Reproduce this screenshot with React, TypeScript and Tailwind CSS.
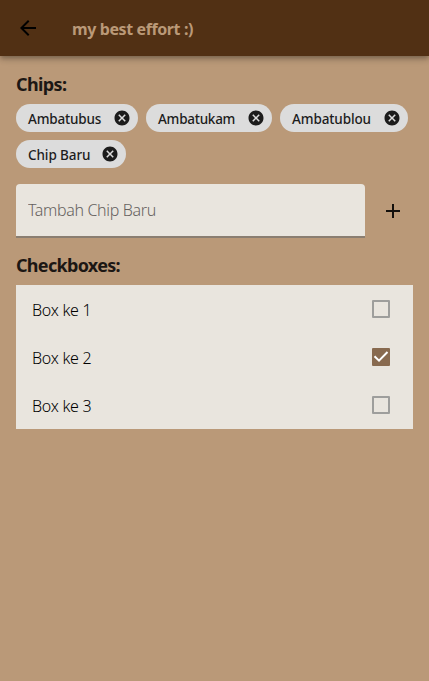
import { useState } from 'react';

const initialChips = [
  { label: 'Ambatubus', width: 'w-[122px]', tracking: 'tracking-[-0.17px]' },
  { label: 'Ambatukam', width: 'w-[126px]', tracking: 'tracking-[-0.25px]' },
  { label: 'Ambatublou', width: 'w-[128px]', tracking: 'tracking-[-0.12px]' },
  { label: 'Chip Baru', width: 'w-[110px]', tracking: 'tracking-[-0.1px]' },
];

function Icon({ path, className }: { path: string; className: string }) {
  return (
    <svg viewBox="0 0 24 24" fill="currentColor" className={`shrink-0 ${className}`}>
      <path d={path} />
    </svg>
  );
}

const BACK = 'M20 11H7.83l5.59-5.59L12 4l-8 8 8 8 1.41-1.41L7.83 13H20z';
const CANCEL =
  'M12 2C6.47 2 2 6.47 2 12s4.47 10 10 10 10-4.47 10-10S17.53 2 12 2zm5 13.59L15.59 17 12 13.41 8.41 17 7 15.59 10.59 12 7 8.41 8.41 7 12 10.59 15.59 7 17 8.41 13.41 12 17 15.59z';

function Checkbox({ checked }: { checked: boolean }) {
  return checked ? (
    <span className="flex h-[18px] w-[18px] items-center justify-center rounded-[1px] bg-[#886a4f] text-white">
      <svg viewBox="0 0 18 18" className="h-[18px] w-[18px]" fill="none" stroke="currentColor" strokeWidth="2">
        <path d="M2.5 8.2 7 12.6 15.5 4" />
      </svg>
    </span>
  ) : (
    <span className="h-[18px] w-[18px] rounded-[1px] border-2 border-[#9e9e9c]" />
  );
}

export default function App() {
  const [boxes, setBoxes] = useState([false, true, false]);
  return (
    <div className="h-[681px] w-full overflow-hidden bg-[#ba9978] font-['Noto_Sans','Open_Sans',sans-serif] text-[#1c1714]">
      <header className="relative flex h-14 items-center bg-[#513014] pl-4 shadow-[0_2px_4px_-1px_rgba(0,0,0,0.2),0_4px_5px_rgba(0,0,0,0.14),0_1px_10px_rgba(0,0,0,0.12)]">
        <Icon path={BACK} className="h-6 w-6 text-black" />
        <h1 className="ml-8 mt-[2px] text-base font-bold tracking-[-0.4px] text-[#ba9978]">my best effort :)</h1>
      </header>
      <main className="px-4 pt-[15px]">
        <h2 className="h-[33px] text-lg leading-[26px] font-bold tracking-[-0.6px]">Chips:</h2>
        <div className="-mr-2 flex flex-wrap gap-2">
          {initialChips.map((c) => (
            <div
              key={c.label}
              className={`flex h-7 items-center justify-between rounded-full bg-[#dcdcdc] pr-[7px] pl-3 text-[#1c1c1c] ${c.width}`}
            >
              <span className={`pt-[2px] text-[13.5px] leading-5 font-medium whitespace-nowrap ${c.tracking}`}>{c.label}</span>
              <Icon path={CANCEL} className="h-[18px] w-[18px]" />
            </div>
          ))}
        </div>
        <div className="mt-4 flex items-center">
          <input
            placeholder="Tambah Chip Baru"
            className="h-[54px] w-[349px] rounded-t border-b-2 border-[#8a7e71] bg-[#e9e5de] px-3 text-base font-light tracking-[-0.35px] outline-none placeholder:text-[#66625e]"
          />
          <Icon path="M19 13h-6v6h-2v-6H5v-2h6V5h2v6h6v2z" className="ml-4 h-6 w-6 text-[#14100c]" />
        </div>
        <h2 className="mt-[14px] h-[33px] text-lg leading-[26px] font-bold tracking-[-0.7px]">Checkboxes:</h2>
        <div className="w-[397px] bg-[#e9e5de]">
          {boxes.map((b, i) => (
            <div
              key={i}
              onClick={() => setBoxes(boxes.map((v, j) => (j === i ? !v : v)))}
              className="flex h-12 items-center justify-between pr-[23px] pl-4"
            >
              <span className="pt-px text-base leading-6 font-light tracking-[-0.25px] text-black">Box ke {i + 1}</span>
              <Checkbox checked={b} />
            </div>
          ))}
        </div>
      </main>
    </div>
  );
}
